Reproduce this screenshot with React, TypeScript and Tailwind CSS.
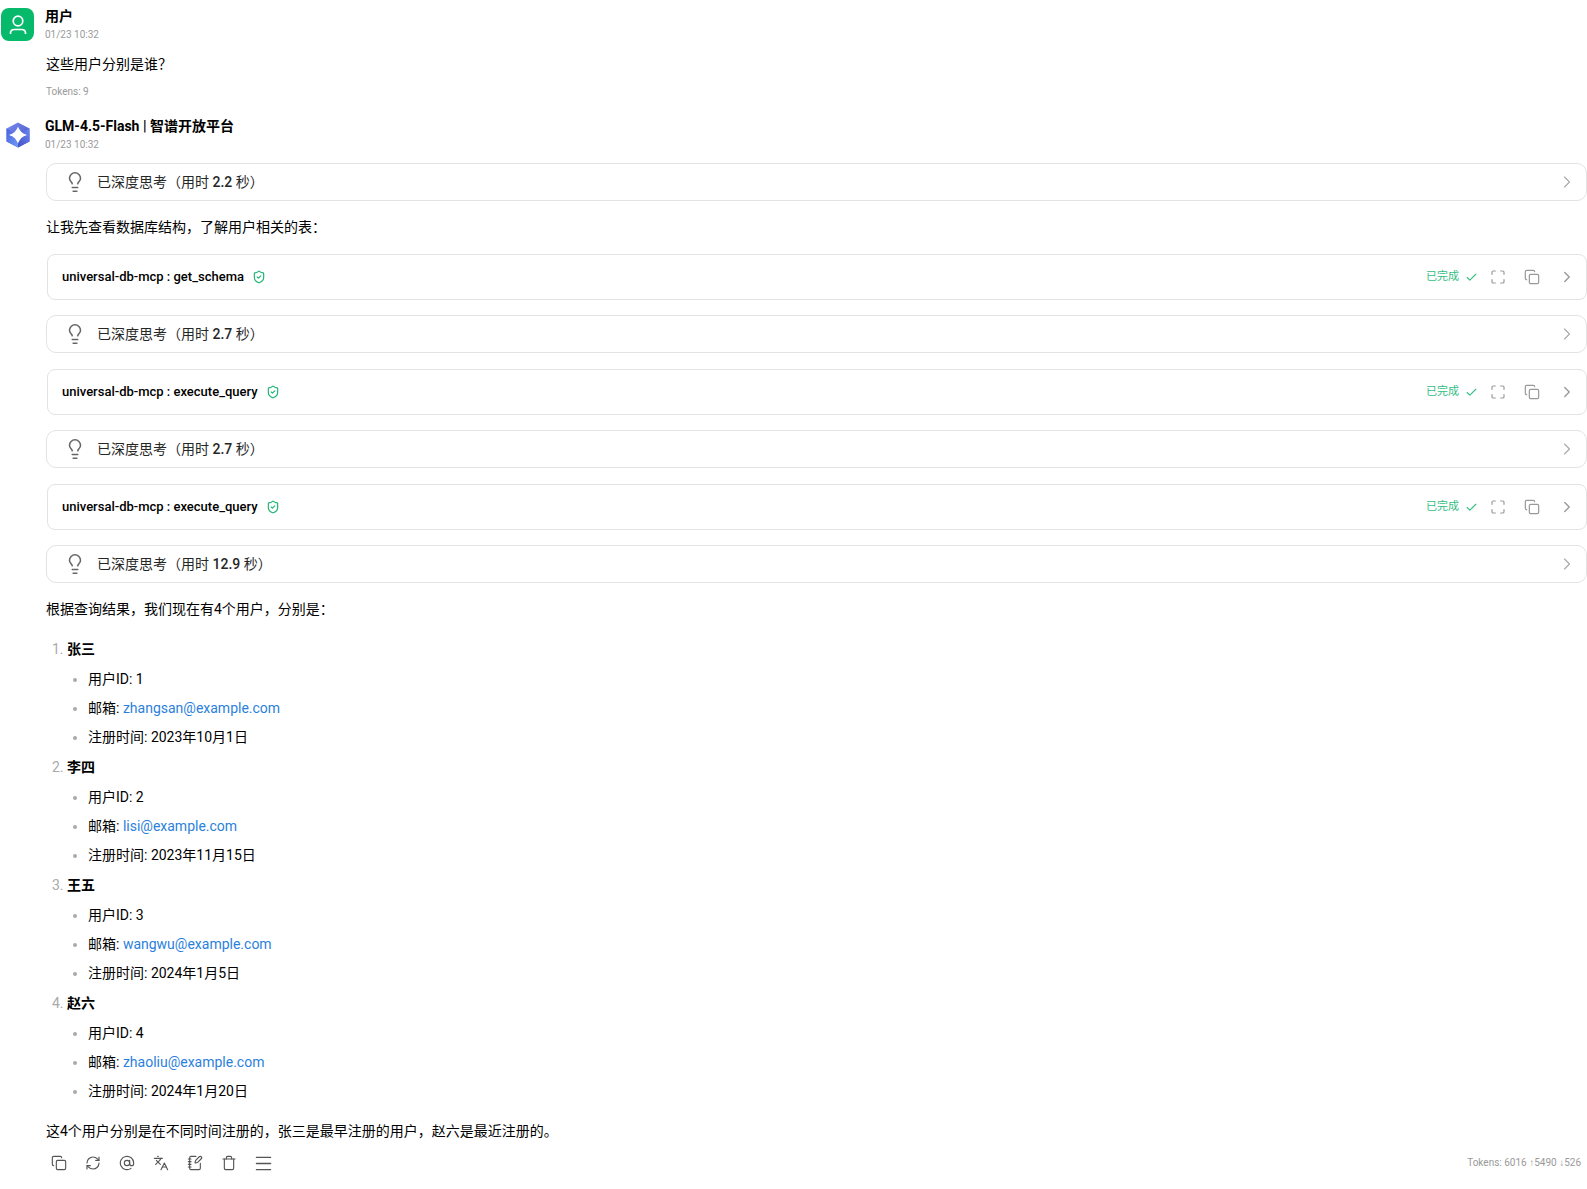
import React from "react";
import {
  AtSign,
  Check,
  ChevronRight,
  Copy,
  Languages,
  Lightbulb,
  Maximize,
  Menu,
  NotebookPen,
  RefreshCw,
  ShieldCheck,
  Trash,
} from "lucide-react";

const users = [
  { id: 1, name: "张三", email: "zhangsan@example.com", date: "2023年10月1日" },
  { id: 2, name: "李四", email: "lisi@example.com", date: "2023年11月15日" },
  { id: 3, name: "王五", email: "wangwu@example.com", date: "2024年1月5日" },
  { id: 4, name: "赵六", email: "zhaoliu@example.com", date: "2024年1月20日" },
];

const actions = [
  { label: "复制", icon: Copy, size: 16 },
  { label: "重新生成", icon: RefreshCw, size: 16 },
  { label: "提及模型", icon: AtSign, size: 16 },
  { label: "翻译", icon: Languages, size: 16 },
  { label: "保存到笔记", icon: NotebookPen, size: 16 },
  { label: "删除", icon: Trash, size: 16 },
  { label: "更多", icon: Menu, size: 21 },
];

function UserAvatar() {
  return (
    <div className="mt-0.5 flex size-[33px] shrink-0 items-center justify-center rounded-lg bg-[#07b96b]">
      <svg viewBox="0 0 20 22" className="w-5 h-[22px]" fill="none" stroke="white" strokeWidth="1.7">
        <circle cx="10" cy="7" r="4.8" />
        <path d="M2.500 20v-1c0-2.300 1.600-3.500 4-3.500h7c2.400 0 4 1.200 4 3.500v1" />
      </svg>
    </div>
  );
}

function ModelLogo() {
  return (
    <div className="mt-0.5 flex size-[33px] shrink-0 items-center justify-center">
      <svg viewBox="0 0 24 26" className="w-6 h-[26px]">
        <defs>
          <linearGradient id="hexTop" x1="0" y1="0" x2="1" y2="1">
            <stop offset="0" stopColor="#7c8cf0" />
            <stop offset="1" stopColor="#3f4fc4" />
          </linearGradient>
          <linearGradient id="hexLeft" x1="0" y1="0" x2="1" y2="1">
            <stop offset="0" stopColor="#4a62e0" />
            <stop offset="1" stopColor="#6f9bf5" />
          </linearGradient>
          <linearGradient id="hexRight" x1="1" y1="0" x2="0" y2="1">
            <stop offset="0" stopColor="#6c86f0" />
            <stop offset="1" stopColor="#4450c6" />
          </linearGradient>
        </defs>
        <path d="M12 0.500 23.500 6.500v13L12 25.500 0.500 19.500v-13z" fill="url(#hexTop)" />
        <path d="M0.500 6.500 12 13v12.500L0.500 19.500z" fill="url(#hexLeft)" />
        <path d="M23.500 6.500v13L12 25.500V13z" fill="url(#hexRight)" />
        <path d="M12 4.500c2 4.800 4 6.800 9 8.500-5 1.700-7 3.700-9 8.500-2-4.800-4-6.800-9-8.500 5-1.700 7-3.700 9-8.500z" fill="white" />
      </svg>
    </div>
  );
}

interface MessageHeaderProps {
  avatar: React.ReactNode;
  name: string;
  time: string;
}

function MessageHeader({ avatar, name, time }: MessageHeaderProps) {
  return (
    <header className="flex items-start gap-[11px] pl-px">
      {avatar}
      <div>
        <h2 className="text-[14px] leading-5 font-bold">{name}</h2>
        <time className="block text-[10px] leading-[18px] text-[#9b9b9b]">{time}</time>
      </div>
    </header>
  );
}

function Thinking({ seconds }: { seconds: string }) {
  return (
    <button
      type="button"
      className="flex h-[38px] w-full items-center rounded-[10px] border border-[#e3e3e3] pl-[17px] pr-[9px] text-left text-[#262626]"
    >
      <Lightbulb size={22} strokeWidth={1.7} className="text-[#666]" />
      <span className="ml-[11px] flex-1">
        已深度思考（用时 <span className="font-medium">{seconds}</span> 秒）
      </span>
      <ChevronRight size={20} strokeWidth={1.4} className="text-[#aaa]" />
    </button>
  );
}

function ToolCall({ name }: { name: string }) {
  return (
    <div className="mt-4 mb-[15px] ml-px flex h-[46px] items-center rounded-lg border border-[#e3e3e3] pl-[14px] pr-[10px]">
      <span className="text-[13px] font-medium">universal-db-mcp : {name}</span>
      <ShieldCheck size={14} className="ml-2 text-[#1fb574]" />
      <div className="ml-auto flex items-center text-[#999]">
        <span className="text-[11px] text-[#34bd83]">已完成</span>
        <Check size={13} strokeWidth={2} className="ml-[6px] mr-3 text-[#34bd83]" />
        <button type="button" aria-label="展开" className="mr-[18px]">
          <Maximize size={16} strokeWidth={1.8} />
        </button>
        <button type="button" aria-label="复制" className="mr-[18px]">
          <Copy size={16} strokeWidth={1.8} />
        </button>
        <button type="button" aria-label="详情">
          <ChevronRight size={18} strokeWidth={1.8} />
        </button>
      </div>
    </div>
  );
}

function UserList() {
  return (
    <ol className="mt-[18px] flex list-decimal flex-col gap-2 pl-[21px] marker:text-[#aaa]">
      {users.map((user) => (
        <li key={user.id}>
          <strong>{user.name}</strong>
          <ul className="mt-2 flex list-disc flex-col gap-[7px] pl-[21px] marker:text-[#aaa]">
            <li>用户ID: {user.id}</li>
            <li>
              邮箱:{" "}
              <a href={`mailto:${user.email}`} className="text-[#2b7fdc]">
                {user.email}
              </a>
            </li>
            <li>注册时间: {user.date}</li>
          </ul>
        </li>
      ))}
    </ol>
  );
}

export default function App() {
  return (
    <main className="bg-white pt-[6px] pb-3 font-['Roboto','Liberation_Sans','Noto_Sans_CJK_SC',sans-serif] text-[14px] leading-[22px] text-black">
      <article>
        <MessageHeader avatar={<UserAvatar />} name="用户" time="01/23 10:32" />
        <div className="pl-[46px]">
          <p className="mt-[9px]">这些用户分别是谁？</p>
          <div className="mt-2 text-[10px] leading-[18px] text-[#999]">Tokens: 9</div>
        </div>
      </article>

      <article className="mt-[15px]">
        <MessageHeader avatar={<ModelLogo />} name="GLM-4.5-Flash | 智谱开放平台" time="01/23 10:32" />
        <div className="mt-[9px] pl-[46px]">
          <Thinking seconds="2.2" />
          <p className="mt-[15px]">让我先查看数据库结构，了解用户相关的表：</p>
          <ToolCall name="get_schema" />
          <Thinking seconds="2.7" />
          <ToolCall name="execute_query" />
          <Thinking seconds="2.7" />
          <ToolCall name="execute_query" />
          <Thinking seconds="12.9" />
          <p className="mt-[15px]">根据查询结果，我们现在有4个用户，分别是：</p>
          <UserList />
          <p className="mt-[18px]">这4个用户分别是在不同时间注册的，张三是最早注册的用户，赵六是最近注册的。</p>
          <footer className="mt-2 flex items-center justify-between pr-[6px]">
            <div className="flex gap-2 text-[#555]">
              {actions.map(({ label, icon: Icon, size }) => (
                <button key={label} type="button" aria-label={label} className="flex size-[26px] items-center justify-center">
                  <Icon size={size} strokeWidth={1.7} />
                </button>
              ))}
            </div>
            <span className="text-[10px] leading-[18px] text-[#999]">Tokens: 6016 ↑5490 ↓526</span>
          </footer>
        </div>
      </article>
    </main>
  );
}
